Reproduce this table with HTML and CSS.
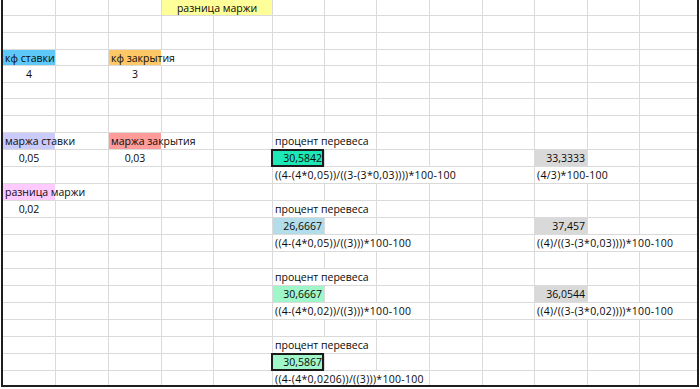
FILE: index.html
```html
<!DOCTYPE html>
<html lang="ru">
<head>
<meta charset="utf-8">
<title>Маржа</title>
<link rel="stylesheet" href="styles.css">
</head>
<body>
<div class="frame">
<div class="sheet">
<div class="c"></div><div class="c"></div><div class="c"></div><div class="c s2 m yellow">разница маржи</div><div class="c"></div><div class="c"></div><div class="c"></div><div class="c"></div><div class="c"></div><div class="c"></div><div class="c"></div><div class="c"></div>
<div class="c"></div><div class="c"></div><div class="c"></div><div class="c"></div><div class="c"></div><div class="c"></div><div class="c"></div><div class="c"></div><div class="c"></div><div class="c"></div><div class="c"></div><div class="c"></div><div class="c"></div>
<div class="c"></div><div class="c"></div><div class="c"></div><div class="c"></div><div class="c"></div><div class="c"></div><div class="c"></div><div class="c"></div><div class="c"></div><div class="c"></div><div class="c"></div><div class="c"></div><div class="c"></div>
<div class="c blue">кф ставки</div><div class="c"></div><div class="c s2 orange">кф закрытия</div><div class="c"></div><div class="c"></div><div class="c"></div><div class="c"></div><div class="c"></div><div class="c"></div><div class="c"></div><div class="c"></div><div class="c"></div>
<div class="c m">4</div><div class="c"></div><div class="c m">3</div><div class="c"></div><div class="c"></div><div class="c"></div><div class="c"></div><div class="c"></div><div class="c"></div><div class="c"></div><div class="c"></div><div class="c"></div><div class="c"></div>
<div class="c"></div><div class="c"></div><div class="c"></div><div class="c"></div><div class="c"></div><div class="c"></div><div class="c"></div><div class="c"></div><div class="c"></div><div class="c"></div><div class="c"></div><div class="c"></div><div class="c"></div>
<div class="c"></div><div class="c"></div><div class="c"></div><div class="c"></div><div class="c"></div><div class="c"></div><div class="c"></div><div class="c"></div><div class="c"></div><div class="c"></div><div class="c"></div><div class="c"></div><div class="c"></div>
<div class="c"></div><div class="c"></div><div class="c"></div><div class="c"></div><div class="c"></div><div class="c"></div><div class="c"></div><div class="c"></div><div class="c"></div><div class="c"></div><div class="c"></div><div class="c"></div><div class="c"></div>
<div class="c s2 lavender">маржа ставки</div><div class="c s2 salmon">маржа закрытия</div><div class="c"></div><div class="c s2">процент перевеса</div><div class="c"></div><div class="c"></div><div class="c"></div><div class="c"></div><div class="c"></div><div class="c"></div>
<div class="c m">0,05</div><div class="c"></div><div class="c m">0,03</div><div class="c"></div><div class="c"></div><div class="c r teal sel">30,5842</div><div class="c"></div><div class="c"></div><div class="c"></div><div class="c"></div><div class="c r gray">33,3333</div><div class="c"></div><div class="c"></div>
<div class="c"></div><div class="c"></div><div class="c"></div><div class="c"></div><div class="c"></div><div class="c s4 f">((4-(4*0,05))/((3-(3*0,03))))*100-100</div><div class="c"></div><div class="c s2 f">(4/3)*100-100</div><div class="c"></div>
<div class="c s2 pink">разница маржи</div><div class="c"></div><div class="c"></div><div class="c"></div><div class="c"></div><div class="c"></div><div class="c"></div><div class="c"></div><div class="c"></div><div class="c"></div><div class="c"></div><div class="c"></div>
<div class="c m">0,02</div><div class="c"></div><div class="c"></div><div class="c"></div><div class="c"></div><div class="c s2">процент перевеса</div><div class="c"></div><div class="c"></div><div class="c"></div><div class="c"></div><div class="c"></div><div class="c"></div>
<div class="c"></div><div class="c"></div><div class="c"></div><div class="c"></div><div class="c"></div><div class="c r lightblue">26,6667</div><div class="c"></div><div class="c"></div><div class="c"></div><div class="c"></div><div class="c r gray">37,457</div><div class="c"></div><div class="c"></div>
<div class="c"></div><div class="c"></div><div class="c"></div><div class="c"></div><div class="c"></div><div class="c s3 f">((4-(4*0,05))/((3)))*100-100</div><div class="c"></div><div class="c"></div><div class="c s3 f">((4)/((3-(3*0,03))))*100-100</div>
<div class="c"></div><div class="c"></div><div class="c"></div><div class="c"></div><div class="c"></div><div class="c"></div><div class="c"></div><div class="c"></div><div class="c"></div><div class="c"></div><div class="c"></div><div class="c"></div><div class="c"></div>
<div class="c"></div><div class="c"></div><div class="c"></div><div class="c"></div><div class="c"></div><div class="c s2">процент перевеса</div><div class="c"></div><div class="c"></div><div class="c"></div><div class="c"></div><div class="c"></div><div class="c"></div>
<div class="c"></div><div class="c"></div><div class="c"></div><div class="c"></div><div class="c"></div><div class="c r mint">30,6667</div><div class="c"></div><div class="c"></div><div class="c"></div><div class="c"></div><div class="c r gray">36,0544</div><div class="c"></div><div class="c"></div>
<div class="c"></div><div class="c"></div><div class="c"></div><div class="c"></div><div class="c"></div><div class="c s3 f">((4-(4*0,02))/((3)))*100-100</div><div class="c"></div><div class="c"></div><div class="c s3 f">((4)/((3-(3*0,02))))*100-100</div>
<div class="c"></div><div class="c"></div><div class="c"></div><div class="c"></div><div class="c"></div><div class="c"></div><div class="c"></div><div class="c"></div><div class="c"></div><div class="c"></div><div class="c"></div><div class="c"></div><div class="c"></div>
<div class="c"></div><div class="c"></div><div class="c"></div><div class="c"></div><div class="c"></div><div class="c s2">процент перевеса</div><div class="c"></div><div class="c"></div><div class="c"></div><div class="c"></div><div class="c"></div><div class="c"></div>
<div class="c"></div><div class="c"></div><div class="c"></div><div class="c"></div><div class="c"></div><div class="c r mint sel">30,5867</div><div class="c"></div><div class="c"></div><div class="c"></div><div class="c"></div><div class="c"></div><div class="c"></div><div class="c"></div>
<div class="c"></div><div class="c"></div><div class="c"></div><div class="c"></div><div class="c"></div><div class="c s3 f">((4-(4*0,0206))/((3)))*100-100</div><div class="c"></div><div class="c"></div><div class="c"></div><div class="c"></div><div class="c"></div>
</div>
</div>
</body>
</html>
```

FILE: styles.css
```css
html, body {
  margin: 0;
  background: #fff;
}

body {
  font-family: "Open Sans", "Liberation Sans", sans-serif;
  font-size: 10.5px;
  color: #0a0a0a;
}

.frame {
  width: 698px;
  height: 387px;
  margin-left: 1px;
  box-sizing: border-box;
  border: 2px solid #1e1e1e;
  border-top: 0;
  overflow: hidden;
  background: #fff;
}

.sheet {
  display: grid;
  grid-template-columns: 53px 53px 53px 52px 59px 52px 52px 53px 53px 52px 53px 52px 60px;
  grid-template-rows: 16px 17px 17px 16px 17px 16px repeat(17, 17px);
  width: 697px;
}

.c {
  box-sizing: border-box;
  border-right: 1px solid #dadada;
  border-bottom: 1px solid #dadada;
  padding: 0 2px;
  white-space: nowrap;
  overflow: hidden;
  line-height: 16px;
}

.s2 { grid-column: span 2; }
.s3 { grid-column: span 3; }
.s4 { grid-column: span 4; }

.m { text-align: center; }
.r { text-align: right; }
.f { letter-spacing: 0.3px; }

.yellow { background: #ffff99; }
.blue { background: #5ec8f8; }
.orange { background: linear-gradient(90deg, #ffc766 52px, transparent 52px); }
.lavender { background: linear-gradient(90deg, #cacafb 52px, transparent 52px); }
.salmon { background: linear-gradient(90deg, #ff9b98 52px, transparent 52px); }
.pink { background: linear-gradient(90deg, #ffcaff 52px, transparent 52px); }
.teal { background: #1de9b6; }
.lightblue { background: #b3dde9; }
.mint { background: #9ff6c8; }
.gray { background: #d9d9d9; }

.sel {
  position: relative;
  overflow: visible;
}

.sel::after {
  content: "";
  position: absolute;
  left: -2px;
  top: -1px;
  right: 0;
  bottom: -1px;
  border: 2px solid #1b1b1b;
}
```
